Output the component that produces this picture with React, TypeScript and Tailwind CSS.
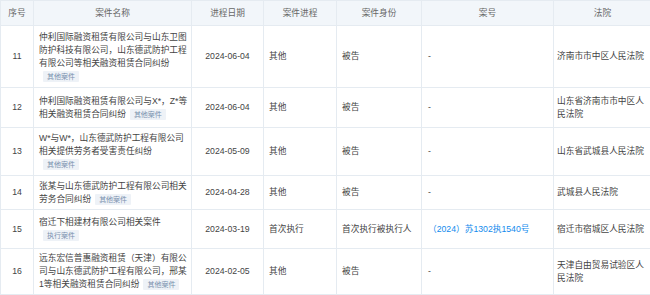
const cases = [
  {
    no: 11,
    name: '仲利国际融资租赁有限公司与山东卫图防护科技有限公司，山东德武防护工程有限公司等相关融资租赁合同纠纷',
    tag: '其他案件',
    date: '2024-06-04',
    stage: '其他',
    role: '被告',
    caseNo: '-',
    court: '济南市市中区人民法院',
    h: 'h-[62px]',
  },
  {
    no: 12,
    name: '仲利国际融资租赁有限公司与X*，Z*等相关融资租赁合同纠纷',
    tag: '其他案件',
    date: '2024-06-04',
    stage: '其他',
    role: '被告',
    caseNo: '-',
    court: '山东省济南市市中区人民法院',
    h: 'h-[40px]',
  },
  {
    no: 13,
    name: 'W*与W*，山东德武防护工程有限公司相关提供劳务者受害责任纠纷',
    tag: '其他案件',
    date: '2024-05-09',
    stage: '其他',
    role: '被告',
    caseNo: '-',
    court: '山东省武城县人民法院',
    h: 'h-[48px]',
  },
  {
    no: 14,
    name: '张某与山东德武防护工程有限公司相关劳务合同纠纷',
    tag: '其他案件',
    date: '2024-04-28',
    stage: '其他',
    role: '被告',
    caseNo: '-',
    court: '武城县人民法院',
    h: 'h-[34px]',
  },
  {
    no: 15,
    name: '宿迁下相建材有限公司相关案件',
    tag: '执行案件',
    date: '2024-03-19',
    stage: '首次执行',
    role: '首次执行被执行人',
    caseNo: '（2024）苏1302执1540号',
    court: '宿迁市宿城区人民法院',
    h: 'h-[39px]',
  },
  {
    no: 16,
    // zero-width space so the line can break between 某 and 1
    name: '远东宏信普惠融资租赁（天津）有限公司与山东德武防护工程有限公司，邢某\u200b1等相关融资租赁合同纠纷',
    tag: '其他案件',
    date: '2024-02-05',
    stage: '其他',
    role: '被告',
    caseNo: '-',
    court: '天津自由贸易试验区人民法院',
    h: 'h-[45px]',
  },
];

const headers = ['序号', '案件名称', '进程日期', '案件进程', '案件身份', '案号', '法院'];

export default function App() {
  return (
    <div className="w-[650px] h-[295px] overflow-hidden bg-white font-['Liberation_Sans','Noto_Sans_CJK_SC',sans-serif] text-[8.7px] leading-[13px] text-[#444]">
      <table className="w-[651px] table-fixed border-collapse">
        <colgroup>
          <col className="w-[33px]" />
          <col className="w-[158px]" />
          <col className="w-[72px]" />
          <col className="w-[73px]" />
          <col className="w-[85px]" />
          <col className="w-[132px]" />
          <col className="w-[98px]" />
        </colgroup>
        <thead>
          <tr className="h-[25px] bg-[#f2f6fa]">
            {headers.map((h) => (
              <th key={h} className="border border-[#e5ebf1] font-normal text-center text-[#666] px-[3px]">
                {h}
              </th>
            ))}
          </tr>
        </thead>
        <tbody>
          {cases.map((c) => (
            <tr key={c.no} className={c.h}>
              <td className="border border-[#e5ebf1] text-center align-middle">{c.no}</td>
              <td className="border border-[#e5ebf1] pl-[5px] pr-[2px] py-[3px] align-middle">
                {c.name}
                <span className="ml-[4px] inline-block px-[4px] h-[11px] leading-[11px] text-[7px] bg-[#eef2f7] text-[#7890ad] rounded-[1px] align-middle">
                  {c.tag}
                </span>
              </td>
              <td className="border border-[#e5ebf1] text-center align-middle">{c.date}</td>
              <td className="border border-[#e5ebf1] px-[5px] align-middle">{c.stage}</td>
              <td className="border border-[#e5ebf1] px-[5px] align-middle">{c.role}</td>
              <td className="border border-[#e5ebf1] px-[6px] align-middle">
                {c.caseNo === '-' ? c.caseNo : <span className="text-[#128bed]">{c.caseNo}</span>}
              </td>
              <td className="border border-[#e5ebf1] pl-[3px] pr-[2px] align-middle">{c.court}</td>
            </tr>
          ))}
        </tbody>
      </table>
    </div>
  );
}
